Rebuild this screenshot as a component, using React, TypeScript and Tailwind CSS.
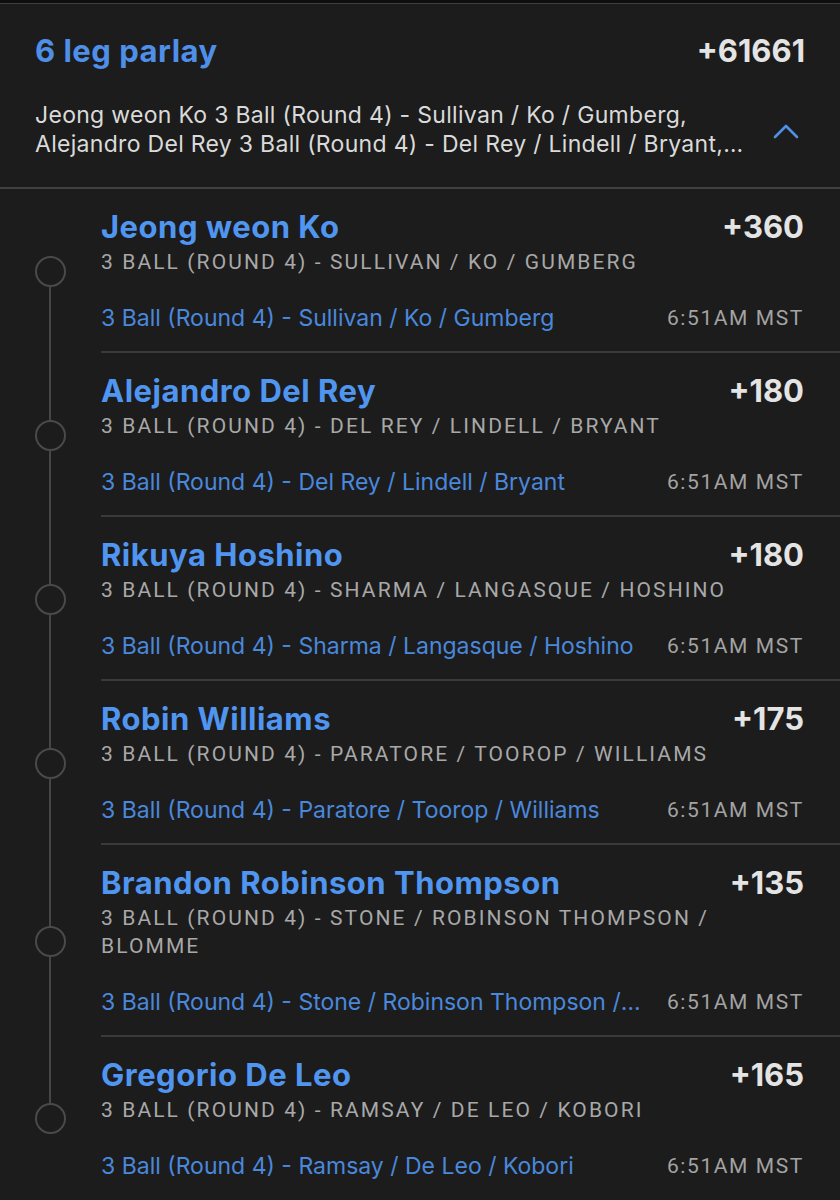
import * as React from "react";

type Leg = {
  name: string;
  odds: string;
  market: string;
  event: string;
};

const legs: Leg[] = [
  {
    name: "Jeong weon Ko",
    odds: "+360",
    market: "3 Ball (Round 4) - Sullivan / Ko / Gumberg",
    event: "3 Ball (Round 4) - Sullivan / Ko / Gumberg",
  },
  {
    name: "Alejandro Del Rey",
    odds: "+180",
    market: "3 Ball (Round 4) - Del Rey / Lindell / Bryant",
    event: "3 Ball (Round 4) - Del Rey / Lindell / Bryant",
  },
  {
    name: "Rikuya Hoshino",
    odds: "+180",
    market: "3 Ball (Round 4) - Sharma / Langasque / Hoshino",
    event: "3 Ball (Round 4) - Sharma / Langasque / Hoshino",
  },
  {
    name: "Robin Williams",
    odds: "+175",
    market: "3 Ball (Round 4) - Paratore / Toorop / Williams",
    event: "3 Ball (Round 4) - Paratore / Toorop / Williams",
  },
  {
    name: "Brandon Robinson Thompson",
    odds: "+135",
    market: "3 Ball (Round 4) - Stone / Robinson Thompson / Blomme",
    event: "3 Ball (Round 4) - Stone / Robinson Thompson / Blomme",
  },
  {
    name: "Gregorio De Leo",
    odds: "+165",
    market: "3 Ball (Round 4) - Ramsay / De Leo / Kobori",
    event: "3 Ball (Round 4) - Ramsay / De Leo / Kobori",
  },
];

const sans = "font-['Inter',_'Open_Sans',_sans-serif]";
const mono = "font-['Roboto',_'Liberation_Sans',_sans-serif]";

function ChevronUp() {
  return (
    <svg width="26" height="16" viewBox="0 0 26 16" fill="none" aria-hidden="true">
      <path d="M2 14 L13 3 L24 14" stroke="#4f8fe8" strokeWidth="2.6" strokeLinecap="round" strokeLinejoin="round" />
    </svg>
  );
}

function LegRow({ leg, first, last }: { leg: Leg; first: boolean; last: boolean }) {
  return (
    <div className="flex">
      {/* timeline */}
      <div className="flex w-[101px] shrink-0 flex-col items-center pr-px">
        <div className={first ? "flex-1" : "w-[2px] flex-1 bg-[#464646]"} />
        <div className="h-[31px] w-[31px] rounded-full border-2 border-[#4a4a4a]" />
        <div className={last ? "flex-1" : "w-[2px] flex-1 bg-[#464646]"} />
      </div>

      {/* content */}
      <div className={`min-w-0 flex-1 pt-[20px] pb-[19px] pr-[36px] ${last ? "" : "border-b-2 border-[#3a3a3a]"}`}>
        <div className="flex items-start justify-between">
          <span className={`${sans} text-[31px] leading-[36px] font-bold tracking-[0.5px] text-[#5096f0]`}>{leg.name}</span>
          <span className={`${sans} text-[31px] leading-[36px] font-bold text-[#e4e4e4]`}>{leg.odds}</span>
        </div>
        <div className={`${mono} mt-[3px] pr-[40px] text-[21px] leading-[28px] tracking-[2.1px] text-[#a8a8a8] uppercase`}>
          {leg.market}
        </div>
        <div className="mt-[28px] flex items-center gap-[24px]">
          <span className={`${sans} min-w-0 flex-1 truncate text-[23px] leading-[28px] text-[#4a88dc]`}>{leg.event}</span>
          <span className={`${mono} shrink-0 text-[21px] leading-[28px] tracking-[1.6px] text-[#a3a3a3]`}>6:51AM MST</span>
        </div>
      </div>
    </div>
  );
}

export default function App() {
  const summary = legs.map((l) => `${l.name} ${l.event}`).join(", ");

  return (
    <div className="h-[1200px] w-[840px] overflow-hidden bg-[#1c1c1c]">
      <div className="h-[3px] bg-[#0e0e0e]" />
      <div className="border-t border-b-2 border-t-[#3e3e3e] border-b-[#404040] px-[35px] pt-[29px] pb-[28px]">
        <div className="flex items-start justify-between">
          <span className={`${sans} text-[31px] leading-[36px] font-bold tracking-[0.5px] text-[#4f8fe8]`}>6 leg parlay</span>
          <span className={`${sans} text-[31px] leading-[36px] font-bold text-[#e4e4e4]`}>+61661</span>
        </div>
        <div className="mt-[32px] flex items-center gap-[28px]">
          <p className={`${sans} line-clamp-2 min-w-0 flex-1 text-[23px] leading-[29px] tracking-[0.3px] text-[#dadada]`}>
            {summary}
          </p>
          <div className="mr-[6px] shrink-0 pt-[2px]">
            <ChevronUp />
          </div>
        </div>
      </div>

      <div className="flex flex-col">
        {legs.map((leg, i) => (
          <LegRow key={leg.name} leg={leg} first={i === 0} last={i === legs.length - 1} />
        ))}
      </div>
    </div>
  );
}
